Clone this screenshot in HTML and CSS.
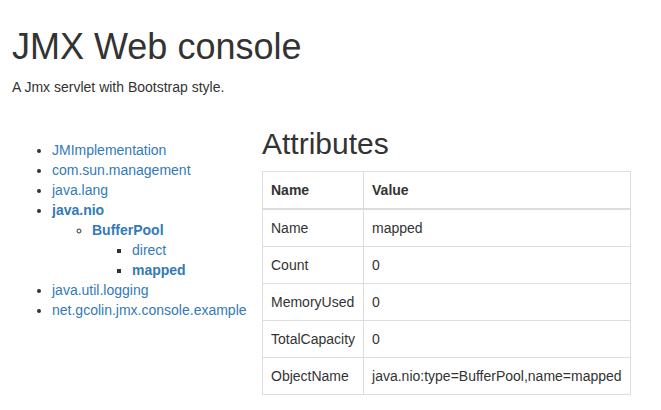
FILE: index.html
```html
<!DOCTYPE html>
<html>
<head>
<meta charset="utf-8">
<title>JMX Web console</title>
<link rel="stylesheet" href="styles.css">
</head>
<body>
<div class="page">
  <h1 class="title">JMX Web console</h1>
  <p class="lead">A Jmx servlet with Bootstrap style.</p>
  <div class="layout">
    <div class="tree-col">
      <ul class="tree">
        <li><a href="#">JMImplementation</a></li>
        <li><a href="#">com.sun.management</a></li>
        <li><a href="#">java.lang</a></li>
        <li><a href="#" class="active">java.nio</a>
          <ul class="tree-sub">
            <li><a href="#" class="active">BufferPool</a>
              <ul class="tree-sub">
                <li><a href="#">direct</a></li>
                <li><a href="#" class="active">mapped</a></li>
              </ul>
            </li>
          </ul>
        </li>
        <li><a href="#">java.util.logging</a></li>
        <li><a href="#">net.gcolin.jmx.console.example</a></li>
      </ul>
    </div>
    <div class="content-col">
      <h2 class="section-title">Attributes</h2>
      <table class="attr-table">
        <thead>
          <tr><th>Name</th><th>Value</th></tr>
        </thead>
        <tbody>
          <tr><td>Name</td><td>mapped</td></tr>
          <tr><td>Count</td><td>0</td></tr>
          <tr><td>MemoryUsed</td><td>0</td></tr>
          <tr><td>TotalCapacity</td><td>0</td></tr>
          <tr><td>ObjectName</td><td>java.nio:type=BufferPool,name=mapped</td></tr>
        </tbody>
      </table>
    </div>
  </div>
</div>
</body>
</html>
```
FILE: styles.css
```css
html, body {
  margin: 0;
  padding: 0;
  background: #fff;
}
body {
  font-family: "Liberation Sans", Arial, Helvetica, sans-serif;
  font-size: 14px;
  line-height: 20px;
  color: #333;
}
.page {
  padding: 0 12px;
}
.title {
  font-size: 36px;
  font-weight: normal;
  line-height: 39.6px;
  margin: 27px 0 10px 0;
  color: #333;
}
.lead {
  margin: 0 0 10px 0;
}
.layout {
  display: flex;
  align-items: flex-start;
}
.tree-col {
  width: 250px;
  flex: none;
}
.tree {
  margin: 33px 0 0 0;
  padding-left: 40px;
  list-style: disc;
}
.tree-sub {
  margin: 0;
  padding-left: 40px;
}
.tree li {
  line-height: 20px;
}
.tree a {
  color: #337ab7;
  text-decoration: none;
}
.tree a.active {
  font-weight: bold;
}
.content-col {
  flex: none;
}
.section-title {
  font-size: 30px;
  font-weight: normal;
  line-height: 33px;
  margin: 20px 0 11px 0;
  color: #333;
}
.attr-table {
  border-collapse: collapse;
  border: 1px solid #ddd;
}
.attr-table th,
.attr-table td {
  padding: 8px;
  border: 1px solid #ddd;
  text-align: left;
  line-height: 20px;
  vertical-align: top;
}
.attr-table th {
  font-weight: bold;
  border-bottom: 2px solid #ddd;
}
```
